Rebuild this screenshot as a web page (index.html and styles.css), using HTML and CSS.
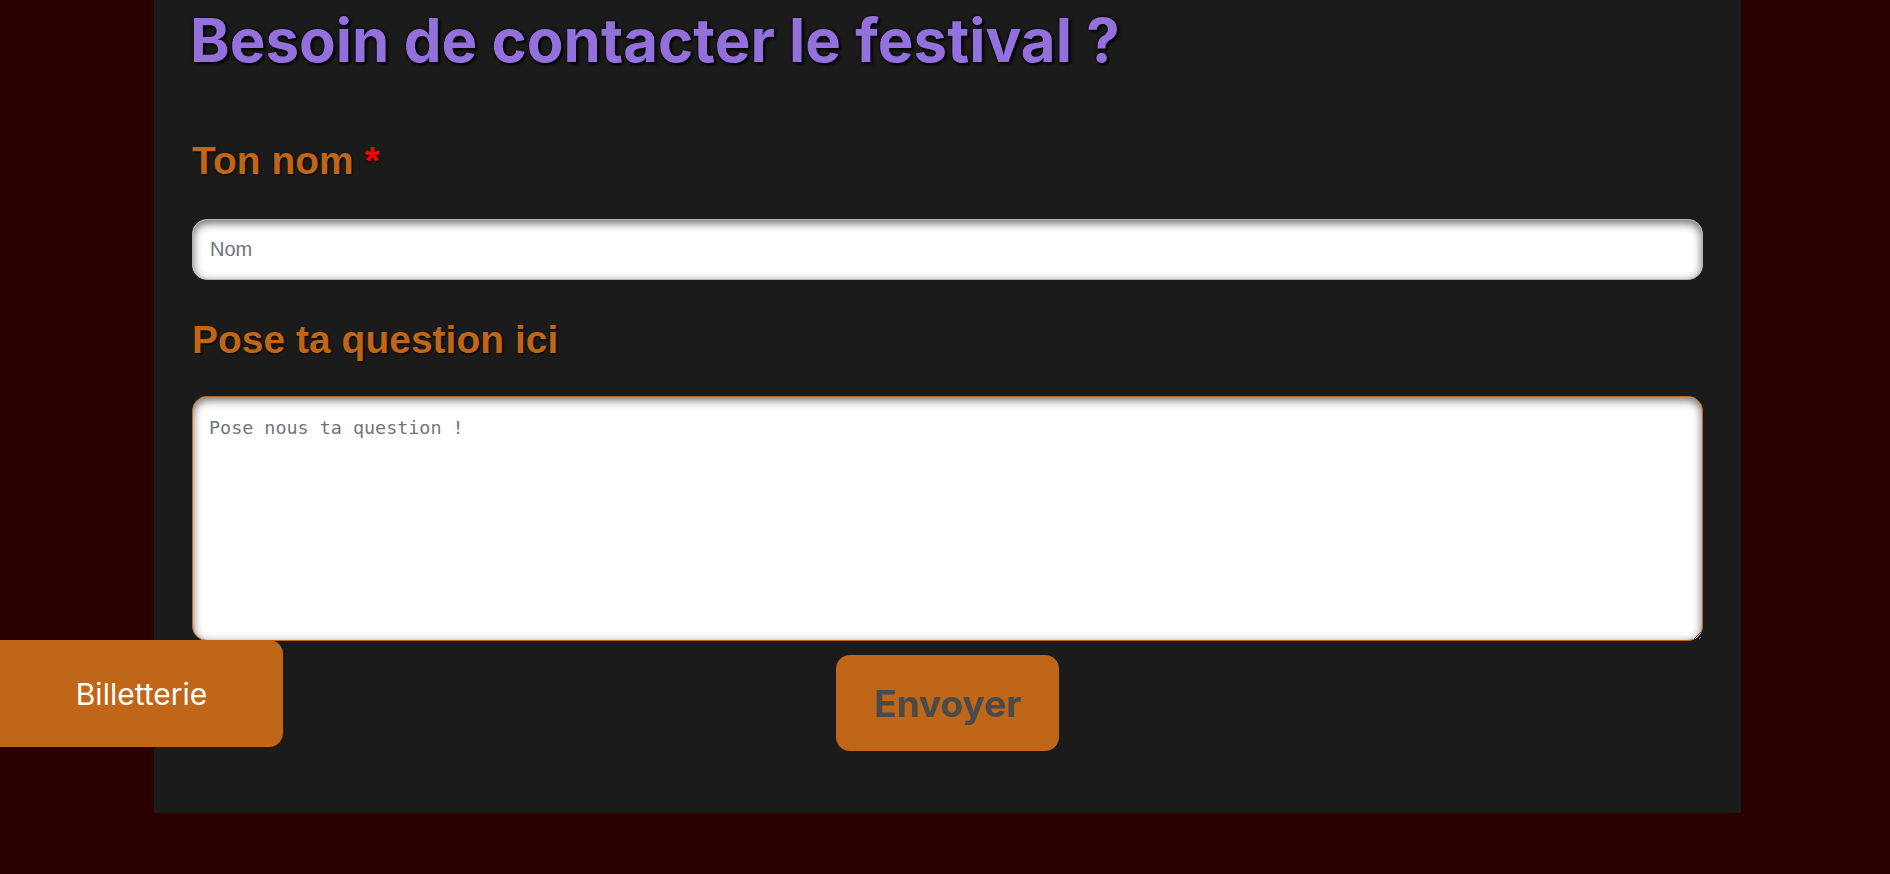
FILE: index.html
```html
<!DOCTYPE html>
<html lang="fr">
<head>
<meta charset="utf-8">
<title>Contact</title>
<link rel="stylesheet" href="styles.css">
</head>
<body>
<main class="panel">
  <h1 class="title">Besoin de contacter le festival ?</h1>
  <form class="form">
    <label class="label label-name" for="nom">Ton nom <span class="req">*</span></label>
    <input class="field" id="nom" type="text" placeholder="Nom">
    <label class="label label-question" for="question">Pose ta question ici</label>
    <textarea class="area" id="question" placeholder="Pose nous ta question !"></textarea>
    <button class="send" type="button">Envoyer</button>
  </form>
</main>
<a class="ticket" href="#">Billetterie</a>
</body>
</html>
```
FILE: styles.css
```css
html, body {
  margin: 0;
  padding: 0;
}
body {
  background: #2a0000;
  min-height: 874px;
  font-family: "Liberation Sans", Arial, sans-serif;
}
.panel {
  width: 1587px;
  margin-left: 154px;
  box-sizing: border-box;
  background: #1b1b1b;
  padding: 4px 38px 62px 38px;
}
.title {
  margin: 0 0 0 -2px;
  font-family: Inter, "Liberation Sans", sans-serif;
  font-weight: 700;
  font-size: 60px;
  line-height: 1.2;
  color: #9370db;
  text-shadow: 2px 2px 3px #000, 0 0 3px #000;
}
.form {
  display: flex;
  flex-direction: column;
}
.label {
  font-family: "Liberation Sans", Arial, sans-serif;
  font-weight: 700;
  font-size: 39px;
  line-height: 44px;
  color: #bf6618;
  text-shadow: 1px 1px 2px #000;
}
.label-name {
  margin-top: 63px;
}
.label-question {
  margin-top: 38px;
}
.req {
  color: #ff0000;
}
.field {
  margin-top: 36px;
  height: 61px;
  box-sizing: border-box;
  border: 1px solid #b3b3b3;
  border-radius: 15px;
  background: #fff;
  box-shadow: inset 0 3px 10px rgba(0,0,0,0.6);
  padding: 0 17px;
  font-family: "Liberation Sans", Arial, sans-serif;
  font-size: 20px;
  outline: none;
}
.field::placeholder {
  color: #6f7480;
}
.area {
  margin-top: 34px;
  height: 245px;
  box-sizing: border-box;
  border: 1px solid #bf6618;
  border-radius: 15px;
  background: #fff;
  box-shadow: inset 0 3px 10px rgba(0,0,0,0.6);
  padding: 20px 16px 17px 16px;
  font-family: "DejaVu Sans Mono", "Liberation Mono", monospace;
  font-size: 18.4px;
  outline: none;
}
.area::placeholder {
  color: #6f7480;
}
.send {
  align-self: center;
  margin-top: 14px;
  width: 223px;
  height: 96px;
  border: none;
  border-radius: 14px;
  background: #bf6618;
  color: #4a4a4a;
  font-family: Inter, "Liberation Sans", sans-serif;
  font-weight: 700;
  font-size: 37px;
  cursor: pointer;
}
.ticket {
  position: fixed;
  left: 0;
  top: 640px;
  width: 283px;
  height: 107px;
  display: flex;
  align-items: center;
  justify-content: center;
  background: #bf6618;
  border-radius: 0 14px 14px 0;
  color: #fff;
  text-decoration: none;
  font-family: Inter, "Liberation Sans", sans-serif;
  font-size: 30px;
}
```
